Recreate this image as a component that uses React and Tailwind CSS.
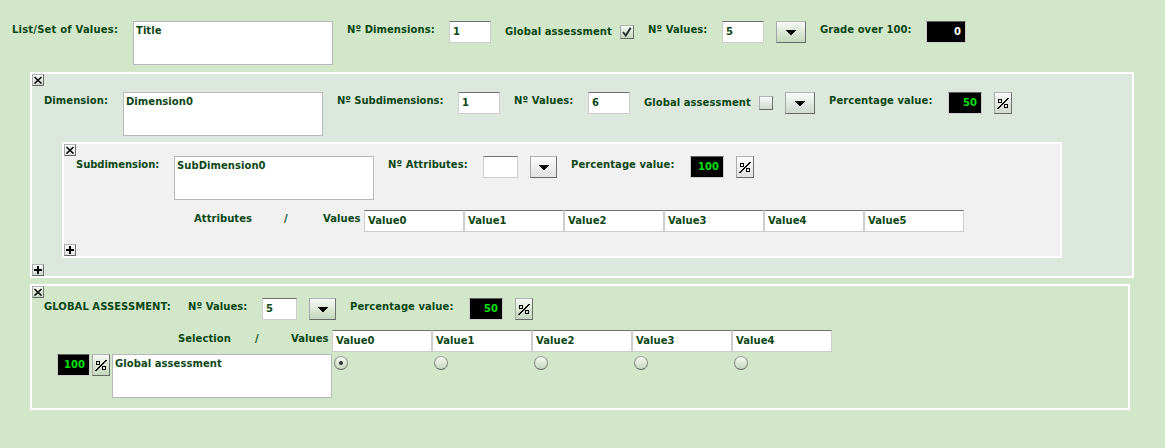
const Label = ({ children, className }) => (
  <span className={`shrink-0 whitespace-nowrap leading-[12px] ${className}`}>{children}</span>
);

const Area = ({ children, className }) => (
  <div className={`h-11 shrink-0 border border-[#b5b9b9] bg-white pl-[2px] pt-[3px] leading-[12px] ${className}`}>
    {children}
  </div>
);

const Field = ({ children, className }) => (
  <div
    className={`h-[22px] shrink-0 border border-[#cdcdcd] border-t-[#707070] bg-white pl-[3px] pt-[4px] leading-[12px] ${className}`}
  >
    {children}
  </div>
);

const Score = ({ children, className }) => (
  <div
    className={`h-[22px] shrink-0 border border-[#cdcdcd] border-t-[#606060] bg-black pr-1 pt-[4px] text-right leading-[12px] ${className}`}
  >
    {children}
  </div>
);

const bevel =
  "shrink-0 border border-t-[#b1b5b5] border-l-[#a5a9a9] border-r-[#6d716d] border-b-[#656965] bg-linear-to-b from-white/80 to-black/5";

const Drop = ({ className }) => (
  <button className={`flex h-[22px] items-center justify-center ${bevel} ${className}`}>
    <svg className="mt-px" width="10" height="5" viewBox="0 0 10 5" shapeRendering="crispEdges">
      <path d="M0 0H10V1H9V2H8V3H7V4H6V5H4V4H3V3H2V2H1V1H0Z" fill="#000" />
    </svg>
  </button>
);

const Percent = ({ className }) => (
  <button className={`flex h-[22px] w-[18px] items-center justify-center ${bevel} ${className}`}>
    <svg className="mt-[2px]" width="12" height="12" viewBox="0 0 12 12" fill="none" stroke="#000" shapeRendering="crispEdges">
      <path d="M0.5 11L11.5 0" strokeWidth="1.5" />
      <path d="M1.5 1.5H4.5V4.5H1.5ZM7.5 6.5H10.5V9.5H7.5Z" />
    </svg>
  </button>
);

const Small = ({ plus }) => (
  <button className={`flex h-3 w-3 items-center justify-center ${bevel}`}>
    {plus ? (
      <svg width="8" height="8" viewBox="0 0 8 8" fill="none" stroke="#000" shapeRendering="crispEdges">
        <path d="M4 0V8M0 4H8" strokeWidth="2" />
      </svg>
    ) : (
      <svg width="8" height="8" viewBox="0 0 8 8" fill="none" stroke="#000">
        <path d="M0.5 1L7.5 7.5M7.5 1L0.5 7.5" strokeWidth="1.5" />
      </svg>
    )}
  </button>
);

const Check = ({ checked }) => (
  <span className={`ml-[9px] mt-1 flex h-[14px] w-[14px] items-center justify-center ${bevel}`}>
    {checked && (
      <svg width="10" height="10" viewBox="0 0 10 10" fill="none" stroke="#293133" strokeWidth="2">
        <path d="M1 5L3.8 8.5L8.7 0.8" />
      </svg>
    )}
  </span>
);

const Radio = ({ checked }) => (
  <span className="mr-[86px] flex h-[14px] w-[14px] shrink-0 items-center justify-center rounded-full border border-t-[#a5aaa3] border-l-[#858a83] border-r-[#858a83] border-b-[#626760] bg-linear-to-b from-white/80 to-black/5">
    {checked && <span className="h-1 w-1 rounded-full bg-[#293133]" />}
  </span>
);

const Values = ({ count }) =>
  Array.from({ length: count }, (_, i) => (
    <Field key={i} className="w-[100px]">
      Value{i}
    </Field>
  ));

export default function App() {
  return (
    <main className="h-[448px] w-[1165px] overflow-hidden bg-[#d2e6c9] pt-[21px] font-['DejaVu_Sans',sans-serif] text-[10px] tracking-[0.06px] font-bold text-[#0b4715]">
      <div className="flex h-[51px] items-start pl-3">
        <Label className="mt-[3px] w-[121px] tracking-[0.2px]">List/Set of Values:</Label>
        <Area className="w-[200px]">Title</Area>
        <Label className="ml-[14px] mt-[3px] w-[102px]">Nº Dimensions:</Label>
        <Field className="w-[42px]">1</Field>
        <Label className="ml-[14px] mt-[5px] w-[106px]">Global assessment</Label>
        <Check checked />
        <Label className="ml-[14px] mt-[3px] w-[74px]">Nº Values:</Label>
        <Field className="w-[42px]">5</Field>
        <Drop className="ml-3 w-[30px]" />
        <Label className="ml-[14px] mt-[3px] w-[106px]">Grade over 100:</Label>
        <Score className="w-10 text-white">0</Score>
      </div>

      <section className="ml-[30px] h-[206px] w-[1104px] border-2 border-white bg-[#dde8dc]">
        <Small />
        <div className="mt-[6px] flex h-[50px] items-start pl-3">
          <Label className="mt-[3px] w-[79px]">Dimension:</Label>
          <Area className="w-[200px]">Dimension0</Area>
          <Label className="ml-[14px] mt-[3px] w-[121px] tracking-[-0.05px]">Nº Subdimensions:</Label>
          <Field className="w-[42px]">1</Field>
          <Label className="ml-[14px] mt-[3px] w-[74px]">Nº Values:</Label>
          <Field className="w-[42px]">6</Field>
          <Label className="ml-[14px] mt-[5px] w-[106px]">Global assessment</Label>
          <Check />
          <Drop className="ml-3 w-[30px]" />
          <Label className="ml-[14px] mt-[3px] w-[119px]">Percentage value:</Label>
          <Score className="w-[34px] text-[#00e010]">50</Score>
          <Percent className="ml-3" />
        </div>
        <section className="ml-[30px] h-[116px] w-[1000px] border-2 border-white bg-[#f1f1f1]">
          <Small />
          <div className="flex h-[54px] items-start pl-3">
            <Label className="mt-[3px] w-[98px] tracking-[-0.04px]">Subdimension:</Label>
            <Area className="w-[200px]">SubDimension0</Area>
            <Label className="ml-[14px] mt-[3px] w-[95px]">Nº Attributes:</Label>
            <Field className="w-[35px]" />
            <Drop className="ml-3 w-[27px]" />
            <Label className="ml-[14px] mt-[3px] w-[119px]">Percentage value:</Label>
            <Score className="w-[34px] text-[#00e010]">100</Score>
            <Percent className="ml-3" />
          </div>
          <div className="flex h-[34px] items-start pl-[130px]">
            <Label className="mt-[3px] w-[90px]">Attributes</Label>
            <Label className="mt-[3px] w-[39px]">/</Label>
            <Label className="mt-[3px] w-[41px]">Values</Label>
            <Values count={6} />
          </div>
          <Small plus />
        </section>
        <div className="mt-[6px]">
          <Small plus />
        </div>
      </section>

      <section className="ml-[30px] mt-[6px] h-[126px] w-[1100px] border-2 border-white">
        <Small />
        <div className="flex h-8 items-start pl-3">
          <Label className="mt-[3px] w-[144px]">GLOBAL ASSESSMENT:</Label>
          <Label className="mt-[3px] w-[74px]">Nº Values:</Label>
          <Field className="w-[35px]">5</Field>
          <Drop className="ml-3 w-[27px]" />
          <Label className="ml-[14px] mt-[3px] w-[119px]">Percentage value:</Label>
          <Score className="w-[34px] text-[#00e010]">50</Score>
          <Percent className="ml-3" />
        </div>
        <div className="flex h-6 items-start pl-[146px]">
          <Label className="mt-[3px] w-[77px]">Selection</Label>
          <Label className="mt-[3px] w-9">/</Label>
          <Label className="mt-[3px] w-[41px]">Values</Label>
          <Values count={5} />
        </div>
        <div className="flex items-start pl-[25px]">
          <Score className="w-[33px] text-[#00e010]">100</Score>
          <Percent className="ml-[2px]" />
          <Area className="ml-[2px] w-[220px]">Global assessment</Area>
          <div className="ml-[2px] mt-[2px] flex">
            {[0, 1, 2, 3, 4].map((i) => (
              <Radio key={i} checked={i === 0} />
            ))}
          </div>
        </div>
      </section>
    </main>
  );
}
